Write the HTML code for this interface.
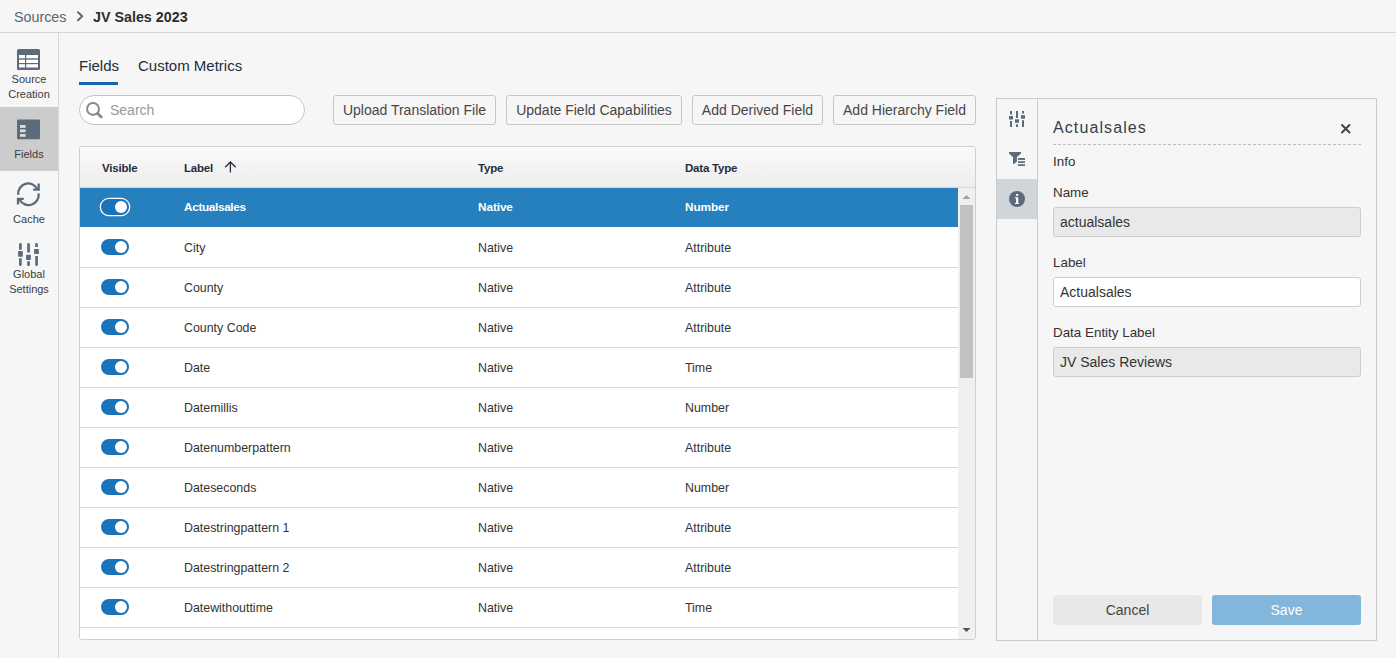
<!DOCTYPE html>
<html><head><meta charset="utf-8">
<style>
*{box-sizing:border-box;margin:0;padding:0}
html,body{width:1396px;height:658px;overflow:hidden;background:#f6f6f6;font-family:"Liberation Sans",sans-serif;color:#333}
svg{position:absolute;display:block}
.tx{position:absolute;white-space:nowrap;line-height:1}
#hdr{position:absolute;left:0;top:0;width:1396px;height:33px;border-bottom:1px solid #d6d6d6}
#side{position:absolute;left:0;top:33px;width:59px;height:625px;border-right:1px solid #d6d6d6}
.sl{position:absolute;left:0;width:58px;text-align:center;font-size:11px;line-height:15px;color:#3c3c3c}
.tab{position:absolute;font-size:15px;color:#1f2d3d;line-height:1}
#ul{position:absolute;left:79px;top:82px;width:39px;height:3px;background:#1565a8}
#search{position:absolute;left:79px;top:95px;width:226px;height:30px;border:1px solid #c4c4c4;border-radius:15px;background:#fff}
.btn{position:absolute;top:95px;height:30px;border:1px solid #c6c6c6;border-radius:3px;background:#f6f6f6;font-size:14px;color:#474747;text-align:center;line-height:28px}
#tbl{position:absolute;left:79px;top:146px;width:897px;height:494px;border:1px solid #cfcfcf;border-radius:3px;background:#fff;overflow:hidden}
#th{position:absolute;left:0;top:0;width:895px;height:41px;background:linear-gradient(#fafafa,#ededed);border-bottom:1px solid #d6d6d6}
.h{position:absolute;top:16px;letter-spacing:-0.2px;font-size:11.5px;font-weight:bold;color:#1f2d3d;line-height:1}
.row{position:absolute;left:0;width:878px;height:40px;border-bottom:1px solid #d9d9d9;background:#fff}
.row.sel{background:#2580bd;border-bottom:1px solid #fff}
.row .c{position:absolute;top:14px;font-size:12.4px;color:#333;line-height:1;white-space:nowrap}
.row.sel .c{color:#fff;font-weight:bold;font-size:11.8px;letter-spacing:-0.1px}
.tg{position:absolute;left:21px;top:11px;width:28px;height:16px;border-radius:8px;background:#1a73b8}
.tg::after{content:"";position:absolute;right:1.8px;top:1.8px;width:12.4px;height:12.4px;border-radius:50%;background:#fff}
.row.sel .tg{box-shadow:0 0 0 1.3px #fff}
#sb{position:absolute;left:878px;top:41px;width:17px;height:452px;background:#f0f0f0}
#thumb{position:absolute;left:880px;top:58px;width:13px;height:173px;background:#c1c1c1}
#panel{position:absolute;left:996px;top:98px;width:381px;height:543px;border:1px solid #cacaca;background:#f6f6f6}
#ptabs{position:absolute;left:0;top:0;width:41px;height:541px;border-right:1px solid #cacaca}
#infotab{position:absolute;left:0;top:80px;width:40px;height:40px;background:#d0d5da}
.lbl{position:absolute;left:56px;font-size:13.4px;color:#333;line-height:1}
.inp{position:absolute;left:56px;width:308px;height:30px;border:1px solid #cdcdcd;border-radius:3px;background:#e9e9e9;font-size:14px;color:#333;padding-left:6px;line-height:28px}
</style></head><body>
<div id="hdr">
  <div class="tx" style="left:14px;top:10px;font-size:14.3px;color:#5b6670">Sources</div>
  <svg style="left:75px;top:9.5px" width="10" height="13" viewBox="0 0 10 13"><path d="M3 2.2 L7.2 6.2 L3 10.2" fill="none" stroke="#5b6b7a" stroke-width="2" stroke-linecap="round" stroke-linejoin="round"/></svg>
  <div class="tx" style="left:93px;top:9.5px;font-size:14.3px;font-weight:bold;color:#2d2d2d">JV Sales 2023</div>
</div>
<div id="side">
  <div style="position:absolute;left:0;top:74px;width:58px;height:64px;background:#cccccc"></div>
</div>
<!-- sidebar icons -->
<svg style="left:17px;top:49px" width="23" height="21" viewBox="0 0 23 21">
  <rect x="0" y="0" width="23" height="21" rx="1.5" fill="#5b6b7a"/>
  <rect x="2" y="6" width="6" height="3.3" fill="#fff"/><rect x="9.2" y="6" width="11.8" height="3.3" fill="#fff"/>
  <rect x="2" y="10.7" width="6" height="3.3" fill="#fff"/><rect x="9.2" y="10.7" width="11.8" height="3.3" fill="#fff"/>
  <rect x="2" y="15.2" width="6" height="3.3" fill="#fff"/><rect x="9.2" y="15.2" width="11.8" height="3.3" fill="#fff"/>
</svg>
<div class="sl" style="top:72px">Source<br>Creation</div>
<svg style="left:17px;top:119px" width="23" height="21" viewBox="0 0 23 21">
  <rect x="0" y="0.5" width="23" height="19.8" rx="1.2" fill="#5b6b7a"/>
  <rect x="3" y="6" width="5.6" height="2.9" fill="#dcdcdc"/>
  <rect x="3" y="10.4" width="5.6" height="2.8" fill="#dcdcdc"/>
  <rect x="3" y="15" width="5.6" height="2.8" fill="#dcdcdc"/>
</svg>
<div class="sl" style="top:147px">Fields</div>
<svg style="left:12px;top:178px" width="34" height="32" viewBox="0 0 34 32">
  <g fill="none" stroke="#5b6b7a" stroke-width="2.3">
  <path d="M6.2 16.8 A10.2 10.2 0 0 1 25.3 10.8"/>
  <path d="M26.6 15.3 A10.2 10.2 0 0 1 7.6 21.8"/>
  <path d="M26.7 5.6 V11.7 H21.2" stroke-linejoin="miter"/>
  <path d="M6 26.6 V20.9 H11.7" stroke-linejoin="miter"/>
  </g>
</svg>
<div class="sl" style="top:212px">Cache</div>
<svg style="left:12px;top:238px" width="34" height="32" viewBox="0 0 34 32"><g fill="#5b6b7a"><path d="M7.05 6.25 A1.35 1.35 0 0 1 9.75 6.25 V11.7 H7.05 Z"/><rect x="6.1" y="13.1" width="4.75" height="5.6" rx="0.6"/><path d="M7.05 20.2 H9.75 V26.65 A1.35 1.35 0 0 1 7.05 26.65 Z"/><path d="M15.2 6.25 A1.35 1.35 0 0 1 17.9 6.25 V14.6 H15.2 Z"/><rect x="14.1" y="16.8" width="4.75" height="5.1" rx="0.6"/><path d="M15.2 23.3 H17.9 V26.65 A1.35 1.35 0 0 1 15.2 26.65 Z"/><path d="M23.2 6.25 A1.35 1.35 0 0 1 25.9 6.25 V9 H23.2 Z"/><rect x="22.1" y="11.1" width="4.75" height="4.9" rx="0.6"/><path d="M23.2 18 H25.9 V26.65 A1.35 1.35 0 0 1 23.2 26.65 Z"/></g></svg>
<div class="sl" style="top:266.5px;line-height:15.6px">Global<br>Settings</div>

<div class="tab" style="left:79px;top:58px">Fields</div>
<div class="tab" style="left:138px;top:58px">Custom Metrics</div>
<div id="ul"></div>
<div id="search"></div>
<svg style="left:86px;top:102px" width="17" height="17" viewBox="0 0 17 17">
  <circle cx="7" cy="6.9" r="5.95" fill="none" stroke="#8a8a8a" stroke-width="2.05"/>
  <path d="M11.6 11.5 L15.2 15.1" stroke="#8a8a8a" stroke-width="2.8" stroke-linecap="round"/>
</svg>
<div class="tx" style="left:110px;top:103px;font-size:14px;color:#999">Search</div>
<div class="btn" style="left:333px;width:163px">Upload Translation File</div>
<div class="btn" style="left:506px;width:176px">Update Field Capabilities</div>
<div class="btn" style="left:692px;width:131px">Add Derived Field</div>
<div class="btn" style="left:833px;width:143px">Add Hierarchy Field</div>

<div id="tbl">
  <div id="th">
    <div class="h" style="left:22px">Visible</div>
    <div class="h" style="left:104px">Label</div>
    <div class="h" style="left:398px">Type</div>
    <div class="h" style="left:605px">Data Type</div>
    <svg style="left:144px;top:13px" width="14" height="15" viewBox="0 0 14 15"><path d="M6.4 12.6 V2 M1.1 7.3 L6.4 2 L11.7 7.3" fill="none" stroke="#26303d" stroke-width="1.3"/></svg>
  </div>
<div class="row sel" style="top:41px"><div class="tg"></div><div class="c" style="left:104px;letter-spacing:-0.35px">Actualsales</div><div class="c" style="left:398px">Native</div><div class="c" style="left:605px">Number</div></div>
<div class="row" style="top:81px"><div class="tg"></div><div class="c" style="left:104px">City</div><div class="c" style="left:398px">Native</div><div class="c" style="left:605px">Attribute</div></div>
<div class="row" style="top:121px"><div class="tg"></div><div class="c" style="left:104px">County</div><div class="c" style="left:398px">Native</div><div class="c" style="left:605px">Attribute</div></div>
<div class="row" style="top:161px"><div class="tg"></div><div class="c" style="left:104px">County Code</div><div class="c" style="left:398px">Native</div><div class="c" style="left:605px">Attribute</div></div>
<div class="row" style="top:201px"><div class="tg"></div><div class="c" style="left:104px">Date</div><div class="c" style="left:398px">Native</div><div class="c" style="left:605px">Time</div></div>
<div class="row" style="top:241px"><div class="tg"></div><div class="c" style="left:104px">Datemillis</div><div class="c" style="left:398px">Native</div><div class="c" style="left:605px">Number</div></div>
<div class="row" style="top:281px"><div class="tg"></div><div class="c" style="left:104px">Datenumberpattern</div><div class="c" style="left:398px">Native</div><div class="c" style="left:605px">Attribute</div></div>
<div class="row" style="top:321px"><div class="tg"></div><div class="c" style="left:104px">Dateseconds</div><div class="c" style="left:398px">Native</div><div class="c" style="left:605px">Number</div></div>
<div class="row" style="top:361px"><div class="tg"></div><div class="c" style="left:104px">Datestringpattern 1</div><div class="c" style="left:398px">Native</div><div class="c" style="left:605px">Attribute</div></div>
<div class="row" style="top:401px"><div class="tg"></div><div class="c" style="left:104px">Datestringpattern 2</div><div class="c" style="left:398px">Native</div><div class="c" style="left:605px">Attribute</div></div>
<div class="row" style="top:441px"><div class="tg"></div><div class="c" style="left:104px">Datewithouttime</div><div class="c" style="left:398px">Native</div><div class="c" style="left:605px">Time</div></div>
<div class="row" style="top:481px"><div class="c" style="left:104px"></div><div class="c" style="left:398px"></div><div class="c" style="left:605px"></div></div>
  <div id="sb"></div>
  <div id="thumb"></div>
  <svg style="left:882px;top:47px" width="9" height="6" viewBox="0 0 9 6"><path d="M0.5 5 L4.5 1 L8.5 5 Z" fill="#a3a3a3"/></svg>
  <svg style="left:882px;top:480px" width="9" height="6" viewBox="0 0 9 6"><path d="M0.5 1 L4.5 5 L8.5 1 Z" fill="#505050"/></svg>
</div>

<div id="panel">
  <div id="ptabs"><div id="infotab"></div></div>
  <div class="tx" style="left:56px;top:21px;font-size:16px;letter-spacing:1.1px;color:#36404a">Actualsales</div>
  <svg style="left:343px;top:24px" width="12" height="12" viewBox="0 0 12 12"><path d="M2 2 L9.5 9.5 M9.5 2 L2 9.5" stroke="#444" stroke-width="2" stroke-linecap="round"/></svg>
  <div style="position:absolute;left:56px;top:45px;width:308px;height:0;border-top:1px dashed #bdbdbd"></div>
  <div class="lbl" style="top:56px">Info</div>
  <div class="lbl" style="top:87px">Name</div>
  <div class="inp" style="top:108px">actualsales</div>
  <div class="lbl" style="top:157px">Label</div>
  <div class="inp" style="top:178px;background:#fff">Actualsales</div>
  <div class="lbl" style="top:227px">Data Entity Label</div>
  <div class="inp" style="top:248px">JV Sales Reviews</div>
  <div style="position:absolute;left:56px;top:496px;width:149px;height:30px;border-radius:3px;background:#e8e8e8;font-size:14px;color:#444;text-align:center;line-height:30px">Cancel</div>
  <div style="position:absolute;left:215px;top:496px;width:149px;height:30px;border-radius:3px;background:#82b6da;font-size:14px;color:#fff;text-align:center;line-height:30px">Save</div>
</div>
<!-- panel icons -->
<svg style="left:1008px;top:110px" width="18" height="18" viewBox="0 0 18 18">
  <g fill="#5b6b7a">
  <rect x="2" y="1" width="2" height="3.5"/><rect x="1" y="6" width="4" height="3.5"/><rect x="2" y="11" width="2" height="6"/>
  <rect x="8" y="1" width="2" height="7"/><rect x="7" y="9.3" width="4" height="3.5"/><rect x="8" y="14.3" width="2" height="2.7"/>
  <rect x="14" y="1" width="2" height="2.5"/><rect x="13" y="5.2" width="4" height="3.5"/><rect x="14" y="10.2" width="2" height="6.8"/>
  </g>
</svg>
<svg style="left:1008px;top:151px" width="18" height="16" viewBox="0 0 18 16">
  <g fill="#5b6b7a">
  <path d="M1 1 H13 V2.5 L8.9 5.9 V10.4 L6 12.9 H5 V5.9 L1 2.5 Z"/>
  <rect x="10" y="7" width="7" height="1.9"/><rect x="10" y="10.2" width="7" height="1.7"/><rect x="10" y="13.2" width="7" height="1.7"/>
  </g>
</svg>
<svg style="left:1009px;top:191px" width="16" height="16" viewBox="0 0 16 16">
  <circle cx="8" cy="8" r="8" fill="#5b6b7a"/>
  <rect x="7.1" y="3" width="2.1" height="1.9" fill="#fff"/>
  <path d="M5.9 6.3 H9.2 V12 H9.9 V13 H5.9 V12 H7.1 V7.3 H5.9 Z" fill="#fff"/>
</svg>
</body></html>
